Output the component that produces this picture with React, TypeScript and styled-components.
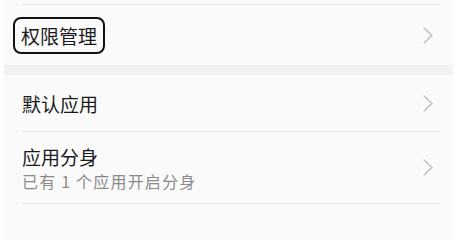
import React from "react"
import styled, { createGlobalStyle } from "styled-components"

const GlobalStyle = createGlobalStyle`
  html, body {
    margin: 0;
    padding: 0;
    background: #ffffff;
  }
  body {
    font-family: "Noto Sans CJK SC", "Noto Sans", sans-serif;
  }
`

type Item = {
  title: string
  subtitle?: string
  marked?: boolean
}

const firstGroup: Item[] = [{ title: "权限管理", marked: true }]
const secondGroup: Item[] = [
  { title: "默认应用" },
  { title: "应用分身", subtitle: "已有 1 个应用开启分身" },
]

function Chevron() {
  return (
    <ChevronIcon width="10" height="17" viewBox="0 0 10 17">
      <polyline
        points="1.2,1 8.8,8.5 1.2,16"
        fill="none"
        stroke="#bdbdbd"
        strokeWidth="1.4"
        strokeLinecap="round"
        strokeLinejoin="round"
      />
    </ChevronIcon>
  )
}

function SettingRow({ item, height, divider }: { item: Item; height: number; divider?: boolean }) {
  return (
    <>
      <Row $height={height}>
        <Texts>
          {item.marked ? <Marked>{item.title}</Marked> : <Title>{item.title}</Title>}
          {item.subtitle && <Subtitle>{item.subtitle}</Subtitle>}
        </Texts>
        <Chevron />
      </Row>
      {divider && <Divider />}
    </>
  )
}

export default function App() {
  return (
    <>
      <GlobalStyle />
      <Panel>
        <TopSpace />
        <Divider />
        {firstGroup.map((item) => (
          <SettingRow key={item.title} item={item} height={60} />
        ))}
        <GroupGap />
        {secondGroup.map((item) => (
          <SettingRow
            key={item.title}
            item={item}
            height={item.subtitle ? 71 : 56}
            divider
          />
        ))}
      </Panel>
    </>
  )
}

const Panel = styled.div`
  margin-left: 4px;
  width: 449px;
  min-height: 100vh;
  background: #fafafa;
  display: flex;
  flex-direction: column;
`

const TopSpace = styled.div`
  height: 4px;
`

const Divider = styled.div`
  height: 1px;
  margin: 0 15px 0 18px;
  background: #e6e6e6;
  flex-shrink: 0;
`

const GroupGap = styled.div`
  height: 10px;
  background: #f2f2f2;
  flex-shrink: 0;
`

const Row = styled.div<{ $height: number }>`
  display: flex;
  align-items: center;
  justify-content: space-between;
  height: ${({ $height }) => $height}px;
  padding: 0 20px 0 18px;
  flex-shrink: 0;
`

const Texts = styled.div`
  display: flex;
  flex-direction: column;
  align-items: flex-start;
`

const Title = styled.span`
  display: block;
  font-size: 19px;
  line-height: 27px;
  color: #1a1a1a;
`

const Marked = styled(Title)`
  margin-left: -9px;
  padding: 3px 6px;
  border: 2px solid #111111;
  border-radius: 8px;
`

const Subtitle = styled.span`
  display: block;
  font-size: 16px;
  line-height: 23px;
  letter-spacing: 1.2px;
  color: #8a8a8a;
`

const ChevronIcon = styled.svg`
  display: block;
  flex-shrink: 0;
`
